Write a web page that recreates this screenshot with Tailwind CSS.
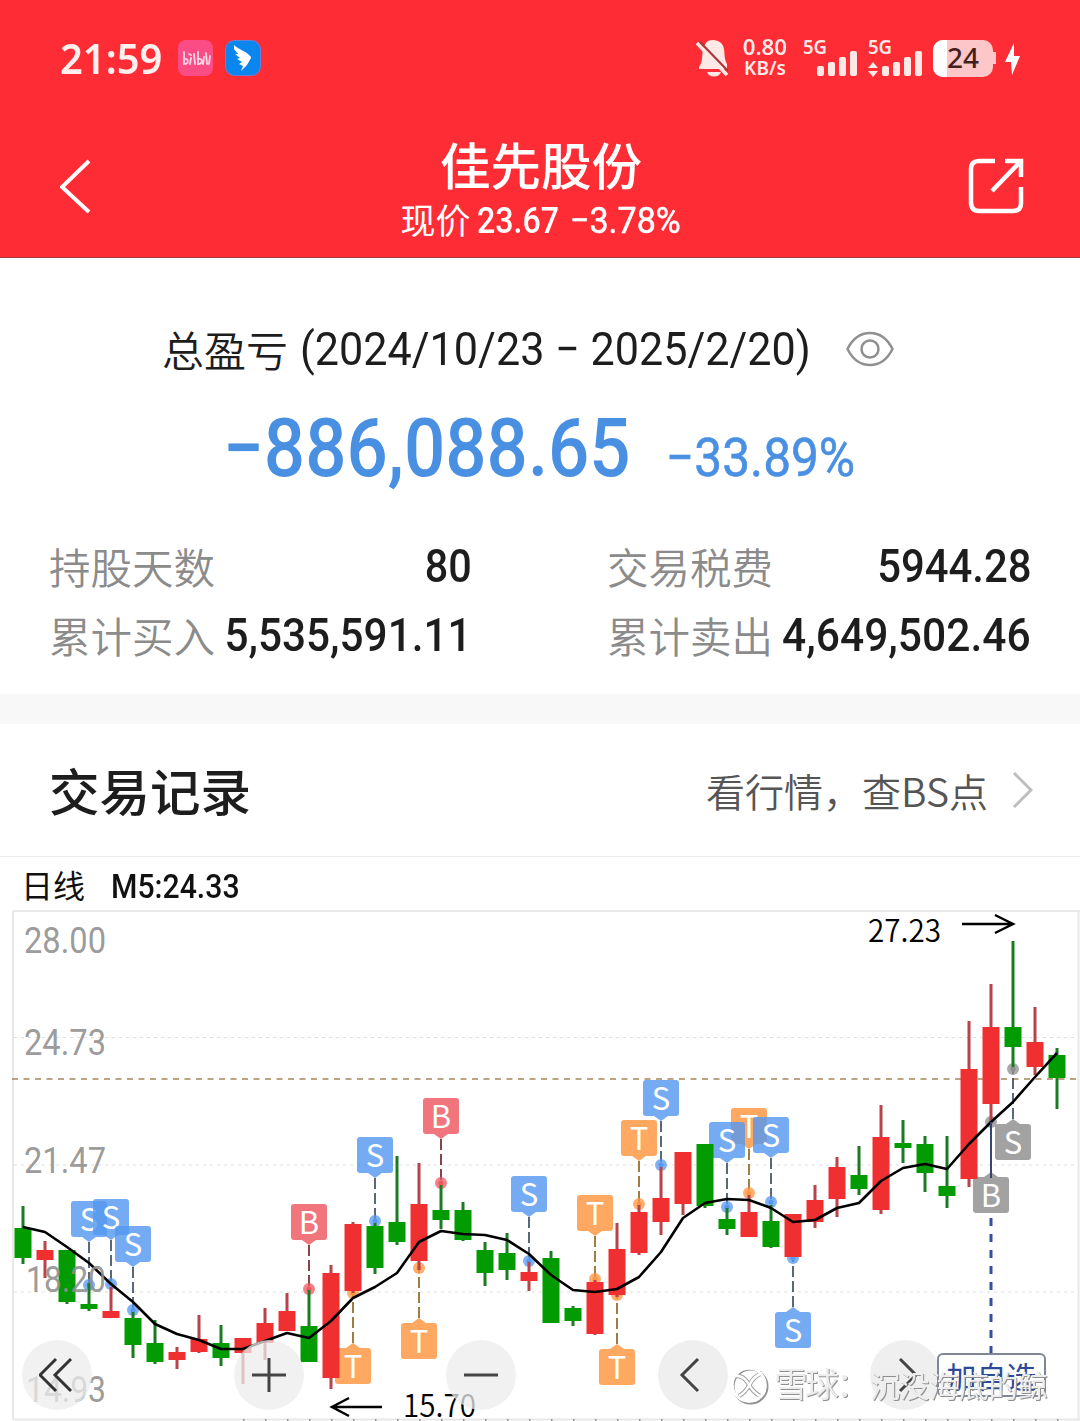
<!DOCTYPE html>
<html lang="zh-CN">
<head>
<meta charset="utf-8">
<title>佳先股份</title>
<script src="https://cdn.jsdelivr.net/npm/@tailwindcss/browser@4"></script>
</head>
<body class="bg-white">
<div class="flex h-[1421px] w-[1080px] flex-col overflow-hidden bg-white font-['Roboto','Noto_Sans_CJK_SC',sans-serif] text-[#1d1d1d]">

  <header class="flex h-[258px] flex-none flex-col border-b border-[#a83a3c] bg-[#fe2c34] text-white">
    <div class="flex h-[116px] items-center pl-[60px] pr-[59px]">
      <div class="w-[118px] font-['Noto_Sans'] text-[42px] leading-none font-semibold text-[#fff0ee]"><span class="inline-block origin-left scale-x-[0.95]">21:59</span></div>
      <svg class="h-9 w-9" viewBox="0 0 36 36"><rect width="35" height="36" rx="8" fill="#fb4c85"/><path d="M6 12v12c5 0 5-6 0-5M13 18l-1 6M11 14l2 1M16 14l1 10M20 12v12c5 0 5-6 0-5M26 17l-1 7M28 13l1 11M32 16l-1 8" fill="none" stroke="#ffd6e6" stroke-width="1.800" stroke-linecap="round"/></svg>
      <svg class="ml-[11px] h-9 w-9" viewBox="0 0 36 36"><rect x=".5" y=".5" width="35" height="35" rx="9" fill="#0a86ee" stroke="#6b7fd6"/><path d="M9 5C14 10 21 11 24 15Q26 16 26 18L22 25 16 31 18 26 14 24 17 22 12 19 15 18 10 14 13 14 9 9Z" fill="#fff"/></svg>
      <div class="ml-auto flex h-10 items-center">
        <svg class="h-10 w-8 overflow-visible" viewBox="-1 0 32 40"><path d="M9 5C11 1 21 1 25 6c4 6 1 13 5 20v5H2v-2c4-5 3-14 4-19Z" fill="#ffe9e6"/><path d="M10 34h14c-2 6-12 6-14 0Z" fill="#ffe9e6"/><path d="M0 5 30 37" stroke="#ffe9e6" stroke-width="3.500"/><path d="M3 4 31 33" stroke="#b0353a" stroke-width="2.200"/></svg>
        <div class="ml-[12px] flex w-[50px] flex-col items-center font-['Noto_Sans'] text-[21px] leading-[21px] font-semibold text-[#ffe9e6]"><span class="inline-block scale-x-[1.06]">0.80</span><span class="text-[19px]">KB/s</span></div>
        <svg class="ml-[13px] h-10 w-[57px] overflow-visible" viewBox="0 0 57 40"><text x="0" y="16" textLength="24" lengthAdjust="spacingAndGlyphs" font-family="Noto Sans" font-weight="600" font-size="19" fill="#ffe9e6">5G</text><g fill="#ffe9e6"><rect x="14" y="28" width="7" height="10" rx="2"/><rect x="25" y="24" width="7" height="14" rx="2"/><rect x="36" y="19" width="7" height="19" rx="2"/><rect x="47" y="13" width="7" height="25" rx="2"/></g></svg>
        <svg class="ml-[8px] h-10 w-[57px] overflow-visible" viewBox="0 0 57 40"><text x="0" y="16" textLength="24" lengthAdjust="spacingAndGlyphs" font-family="Noto Sans" font-weight="600" font-size="19" fill="#ffe9e6">5G</text><g fill="#ffe9e6"><path d="M0 30 5 24 10 30ZM0 33h10l-5 6Z"/><rect x="14" y="28" width="7" height="10" rx="2"/><rect x="25" y="24" width="7" height="14" rx="2"/><rect x="36" y="19" width="7" height="19" rx="2"/><rect x="47" y="13" width="7" height="25" rx="2"/></g></svg>
        <svg class="ml-[8px] h-10 w-[64px]" viewBox="0 0 64 40"><rect x="0" y="2" width="60" height="37" rx="10" fill="#fdc6c8"/><path d="M14 2h-4a10 10 0 0 0-10 10v17a10 10 0 0 0 10 10h4Z" fill="#fff"/><path d="M60 14h3v12h-3Z" fill="#fdc6c8"/><text x="14" y="30" textLength="32" lengthAdjust="spacingAndGlyphs" font-family="Noto Sans" font-weight="500" font-size="27" fill="#431f20">24</text></svg>
        <svg class="ml-[8px] h-10 w-4" viewBox="0 0 16 40"><path d="M9 5 0 24h6l1 13L15 18H9Z" fill="#fff"/></svg>
      </div>
    </div>
    <div class="flex h-[141px] items-start justify-between pl-[60px] pr-[56px]">
      <svg class="mt-[43px] h-[56px] w-[54px]" viewBox="0 0 54 56"><path d="M29 2 2 28 29 53" fill="none" stroke="#fff" stroke-width="4"/></svg>
      <div class="flex flex-col items-center pt-[19px]">
        <h1 class="font-['Noto_Sans_CJK_SC'] text-[50.500px] leading-[56px] font-medium">佳先股份</h1>
        <div class="mt-[4px] flex h-[52px] w-[281px] items-center text-[37px] leading-[52px] whitespace-nowrap"><span class="w-[76px] pt-[3px] text-[35px]">现价</span><span class="w-[93px] flex-none"><span class="inline-block origin-left scale-x-[0.87] font-medium">23.67</span></span><span class="w-[112px] flex-none"><span class="inline-block origin-left scale-x-[0.92] [-webkit-text-stroke:0.5px_#fff]">−3.78%</span></span></div>
      </div>
      <svg class="mt-[42px] h-[56px] w-[56px]" viewBox="0 0 56 56"><path d="M27 3H11Q3 3 3 11V44Q3 53 11 53H45Q53 53 53 45V29M37 3H53V19M53 3 24 33" fill="none" stroke="#fff" stroke-width="4.500"/></svg>
    </div>
  </header>

  <section class="flex h-[436px] flex-none flex-col px-[49px]">
    <div class="mt-[61px] flex h-[60px] items-center pl-[113px] whitespace-nowrap">
      <span class="w-[138px] font-['Noto_Sans_CJK_SC'] text-[42px] leading-[60px] font-[350]">总盈亏</span>
      <span class="w-[546px] text-[46.500px] leading-[60px]"><span class="inline-block origin-left scale-x-[0.928]">(2024/10/23 − 2025/2/20)</span></span>
      <svg class="h-9 w-12 flex-none" viewBox="0 0 48 36"><path d="M1.500 18C7 7 15 2 24 2s17 5 22.500 16C41 29 33 34 24 34S7 29 1.500 18Z" fill="none" stroke="#8f8f8f" stroke-width="2.500"/><circle cx="24" cy="18" r="8.500" fill="none" stroke="#8f8f8f" stroke-width="2.500"/></svg>
    </div>
    <div class="mt-[23px] flex h-[94px] items-baseline pl-[174px] whitespace-nowrap text-[#4a90e2]">
      <span class="w-[443px] text-[81px] leading-[94px] font-medium"><span class="inline-block origin-left scale-x-[0.897]">−886,088.65</span></span>
      <span class="text-[54px] leading-[60px]"><span class="inline-block origin-left scale-x-[0.918] [-webkit-text-stroke:0.6px_#4a90e2]">−33.89%</span></span>
    </div>
    <dl class="mt-[36px] grid grid-cols-[423px_424px] gap-x-[135px] text-[#1d1d1d]">
      <div class="flex h-[69px] items-center justify-between whitespace-nowrap"><dt class="pb-[1px] font-['Noto_Sans_CJK_SC'] text-[41.500px] leading-[60px] font-[350] text-[#8b8b8b]">持股天数</dt><dd class="origin-right scale-x-[0.89] text-[46.500px] font-medium">80</dd></div>
      <div class="flex h-[69px] items-center justify-between whitespace-nowrap"><dt class="pb-[1px] font-['Noto_Sans_CJK_SC'] text-[41.500px] leading-[60px] font-[350] text-[#8b8b8b]">交易税费</dt><dd class="origin-right scale-x-[0.9] text-[46.500px] font-medium">5944.28</dd></div>
      <div class="flex h-[69px] items-center justify-between whitespace-nowrap"><dt class="w-[166px] pb-[1px] font-['Noto_Sans_CJK_SC'] text-[41.500px] leading-[60px] font-[350] text-[#8b8b8b]">累计买入</dt><dd class="flex w-[257px] justify-end"><span class="origin-right scale-x-[0.91] text-[46.500px] font-medium">5,535,591.11</span></dd></div>
      <div class="flex h-[69px] items-center justify-between whitespace-nowrap"><dt class="w-[166px] pb-[1px] font-['Noto_Sans_CJK_SC'] text-[41.500px] leading-[60px] font-[350] text-[#8b8b8b]">累计卖出</dt><dd class="flex w-[258px] justify-end"><span class="origin-right scale-x-[0.915] text-[46.500px] font-medium">4,649,502.46</span></dd></div>
    </dl>
  </section>

  <div class="h-[30px] flex-none bg-[#f8f8f8]"></div>

  <section class="flex h-[133px] flex-none items-center border-b border-[#ececec] pl-[49px] pr-[47px]">
    <h2 class="pb-[2px] font-['Noto_Sans_CJK_SC'] text-[50.500px] leading-[70px] font-medium">交易记录</h2>
    <div class="ml-auto font-['Noto_Sans_CJK_SC'] text-[39px] leading-[60px] font-[350] whitespace-nowrap text-[#555]">看行情，查BS点</div>
    <svg class="ml-[24px] h-9 w-[21px]" viewBox="0 0 21 36"><path d="M2 1 19 18 2 35" fill="none" stroke="#bdbdbd" stroke-width="3"/></svg>
  </section>

  <section class="flex h-[564px] flex-none flex-col">
    <div class="flex h-[54px] flex-none items-center pl-[21px] pt-[6px] text-[33px] whitespace-nowrap text-[#111]"><span class="w-[90px] text-[32px]">日线</span><span class="inline-block origin-left scale-x-[0.915] font-medium">M5:24.33</span></div>
    <div class="relative h-[510px] w-[1080px] flex-none">
      <svg id="chart" class="block h-[510px] w-[1080px] overflow-visible" viewBox="0 911 1080 510" font-family="Roboto, 'Noto Sans CJK SC', sans-serif">
        <path d="M13 911H1080M13 911V1419M1078.500 911V1419M13 1419.500H1080" fill="none" stroke="#e8e8e8" stroke-width="2"/>
        <path d="M14 1037.500H1078M14 1165H1078M14 1292H1078" fill="none" stroke="#dedede" stroke-dasharray="3 4"/>
        <path d="M12 1079H1078" fill="none" stroke="#a5855c" stroke-width="1.500" stroke-dasharray="6 5.500"/>
        <g id="marks"></g>
        <g id="candles"></g>
        <path id="average" fill="none" stroke="#000" stroke-width="2.600" stroke-linejoin="round"/>
        <path d="M991 1122V1178" stroke="#34486f" stroke-width="2"/>
        <path d="M991 1218V1354" stroke="#36509c" stroke-width="3" stroke-dasharray="8 8"/>
        <g font-size="37" fill="#8e8e8e" fill-opacity=".9">
          <text x="24" y="953" textLength="82" lengthAdjust="spacingAndGlyphs">28.00</text>
          <text x="24" y="1055" textLength="82" lengthAdjust="spacingAndGlyphs">24.73</text>
          <text x="24" y="1173" textLength="82" lengthAdjust="spacingAndGlyphs">21.47</text>
          <text x="26" y="1292" textLength="80" lengthAdjust="spacingAndGlyphs">18.20</text>
          <text x="26" y="1402" textLength="80" lengthAdjust="spacingAndGlyphs">14.93</text>
        </g>
        <g font-family="Noto Sans CJK SC" font-size="31" font-weight="350" fill="#000">
          <text x="868" y="942" textLength="73" lengthAdjust="spacingAndGlyphs">27.23</text>
          <text x="403" y="1417" textLength="73" lengthAdjust="spacingAndGlyphs">15.70</text>
        </g>
        <path d="M962 924H1013M995 915 1013 924 995 933M382 1407H332M349 1398 332 1407 349 1416" fill="none" stroke="#000" stroke-width="2.500"/>
        <path d="M243 1420H1078" stroke="#777" stroke-width="1.500" stroke-dasharray="1.500 20.500"/>
      </svg>
      <button class="absolute top-[429px] left-[22px] flex size-[70px] items-center justify-center rounded-full bg-[#ececec]/75"><svg class="h-9 w-9" viewBox="0 0 36 36"><path d="M17 2 1 18 17 34M32 2 16 18 32 34" fill="none" stroke="#333" stroke-width="3"/></svg></button>
      <button class="absolute top-[429px] left-[234px] flex size-[70px] items-center justify-center rounded-full bg-[#ececec]/75"><svg class="h-9 w-9" viewBox="0 0 36 36"><path d="M1 18H35M18 1V35" stroke="#444" stroke-width="3"/></svg></button>
      <button class="absolute top-[429px] left-[446px] flex size-[70px] items-center justify-center rounded-full bg-[#ececec]/75"><svg class="h-9 w-9" viewBox="0 0 36 36"><path d="M1 18H35" stroke="#444" stroke-width="3"/></svg></button>
      <button class="absolute top-[429px] left-[658px] flex size-[70px] items-center justify-center rounded-full bg-[#ececec]/85"><svg class="h-9 w-9" viewBox="0 0 36 36"><path d="M23 2 7 18 23 34" fill="none" stroke="#444" stroke-width="3"/></svg></button>
      <button class="absolute top-[429px] left-[870px] flex size-[70px] items-center justify-center rounded-full bg-[#ececec]/85"><svg class="h-9 w-9" viewBox="0 0 36 36"><path d="M13 2 29 18 13 34" fill="none" stroke="#444" stroke-width="3"/></svg></button>
      <button class="absolute top-[442px] left-[937px] flex h-[44px] w-[109px] items-center justify-center rounded-md border-2 border-[#7f8796] bg-white font-['Noto_Sans_CJK_SC'] text-[30px] leading-[44px] whitespace-nowrap text-[#2c4a97]">加自选</button>
      <svg class="pointer-events-none absolute top-[439px] left-[725px] h-[60px] w-[340px] overflow-visible" viewBox="725 1350 340 60" font-family="Noto Sans CJK SC">
        <g fill="none" stroke="#909090" stroke-width="2" transform="translate(1.500 1.500)"><circle cx="749" cy="1385" r="17"/></g>
        <g fill="none" stroke="#a0a0a0" stroke-width="4.500"><path d="M736 1376Q743 1375 748 1383Q753 1393 762 1397M762 1373Q753 1377 750 1384Q745 1393 739 1396"/></g>
        <g fill="none" stroke="#fff" stroke-width="2.500"><circle cx="749" cy="1385" r="16.500"/><path d="M736 1376Q743 1375 748 1383Q753 1393 762 1397M762 1373Q753 1377 750 1384Q745 1393 739 1396"/></g>
        <g fill="#ededed" style="filter:drop-shadow(1.5px 1.5px 0 #8f8f8f)"><text x="774" y="1397" textLength="96" font-size="34">雪球：</text><text x="870" y="1396.500" textLength="178" font-size="30">沉没海底的鲸</text></g>
      </svg>
    </div>
  </section>
</div>

<script>
// Candles: colour, wick top, wick bottom, body top, body bottom; one every 22px
const candles = [
  ['g',1206,1264,1228,1258],['r',1241,1278,1250,1260],['g',1250,1304,1250,1302],['g',1283,1311,1304,1309],
  ['r',1287,1318,1311,1318],['g',1312,1358,1318,1345],['g',1320,1364,1343,1362],['r',1347,1369,1352,1360],
  ['r',1315,1353,1339,1352],['g',1325,1366,1343,1358],['r',1338,1384,1338,1353],['r',1308,1360,1323,1343],
  ['r',1293,1331,1311,1331],['g',1290,1362,1326,1362],['r',1265,1389,1273,1378],['r',1222,1293,1224,1291],
  ['g',1223,1274,1226,1268],['g',1156,1245,1222,1242],['r',1163,1270,1204,1261],['g',1185,1229,1210,1220],
  ['g',1202,1241,1210,1240],['g',1242,1286,1250,1273],['g',1233,1280,1253,1270],['r',1262,1291,1272,1281],
  ['g',1251,1323,1258,1323],['g',1306,1326,1308,1321],['r',1280,1335,1282,1334],['r',1223,1297,1249,1295],
  ['r',1205,1255,1212,1253],['r',1167,1235,1198,1222],['r',1152,1215,1152,1204],['g',1144,1208,1144,1206],
  ['g',1208,1235,1219,1229],['r',1195,1237,1212,1237],['g',1205,1248,1221,1247],['r',1214,1257,1214,1257],
  ['r',1185,1228,1200,1222],['r',1157,1217,1167,1199],['g',1146,1195,1175,1189],['r',1105,1214,1137,1210],
  ['g',1120,1163,1143,1148],['g',1136,1192,1144,1173],['g',1136,1208,1186,1196],['r',1021,1187,1069,1179],
  ['r',984,1120,1027,1104],['g',941,1067,1027,1047],['r',1007,1075,1042,1067],['g',1048,1109,1055,1078]];
const fills = { g: ['#029c02', '#1c7a22'], r: ['#f03030', '#b8434b'] };
document.getElementById('candles').innerHTML = candles.map(([c, wt, wb, t, b], i) => {
  const x = 23 + i * 22;
  return `<rect x="${x - 1.5}" y="${wt}" width="3" height="${wb - wt}" fill="${fills[c][1]}"/><rect x="${x - 8.5}" y="${t}" width="17" height="${b - t}" fill="${fills[c][0]}"/>`;
}).join('');

// Five-day average
const avg = [1227,1232,1247,1263,1284,1302,1324,1334,1340,1349,1349,1341,1333,1338,1321,1298,1287,1273,1242,1231,1234,1235,1240,1254,1275,1290,1292,1289,1277,1252,1218,1203,1199,1200,1208,1222,1220,1208,1203,1181,1168,1164,1169,1144,1122,1102,1077,1053];
document.getElementById('average').setAttribute('d', 'M' + avg.map((y, i) => `${23 + i * 22} ${y}`).join('L'));

// Trade marks: letter, x, box top, dot y, optional colour
const marks = [['S',89,1201,1285],['S',111,1199,1284],['S',133,1226,1310],['B',309,1204,1289],['T',353,1348,1293],
  ['S',375,1137,1221],['T',419,1323,1268],['B',441,1098,1183],['S',529,1176,1261],['T',595,1195,1279],['T',617,1349,1295],
  ['T',639,1120,1204],['S',661,1080,1165],['T',749,1108,1193],['S',727,1122,1207],['S',771,1117,1202],['S',793,1312,1258],
  ['S',1013,1124,1069,'#8d8d8d'],['B',991,1177,1122,'#8d8d8d']];
const tones = { S: '#5698ef', T: '#ff9540', B: '#ee5760' };
document.getElementById('marks').innerHTML = marks.map(([t, x, y, dot, tone]) => {
  const c = tone || tones[t], above = y < dot;
  const tip = above ? `M${x - 7} ${y + 36}L${x} ${y + 41}L${x + 7} ${y + 36}Z` : `M${x - 7} ${y}L${x} ${y - 5}L${x + 7} ${y}Z`;
  const from = above ? y + 41 : y - 5;
  return `<g fill="${c}" fill-opacity=".82"><rect x="${x - 18}" y="${y}" width="36" height="36" rx="3"/><path d="${tip}"/></g>
    <path d="M${x} ${from}V${dot}" stroke="${t === 'T' ? '#96702f' : t === 'B' && !tone ? '#7d3038' : '#47586d'}" stroke-width="1.800" stroke-dasharray="11 4"/>
    <circle cx="${x}" cy="${dot}" r="6" fill="${c}" fill-opacity=".75"/><circle cx="${x}" cy="${dot}" r="2.500" fill="${c}"/>
    <text x="${x}" y="${y + 29.5}" text-anchor="middle" font-family="Noto Sans CJK SC" font-size="31" fill="#fff">${t}</text>`;
}).join('');
</script>
</body>
</html>
